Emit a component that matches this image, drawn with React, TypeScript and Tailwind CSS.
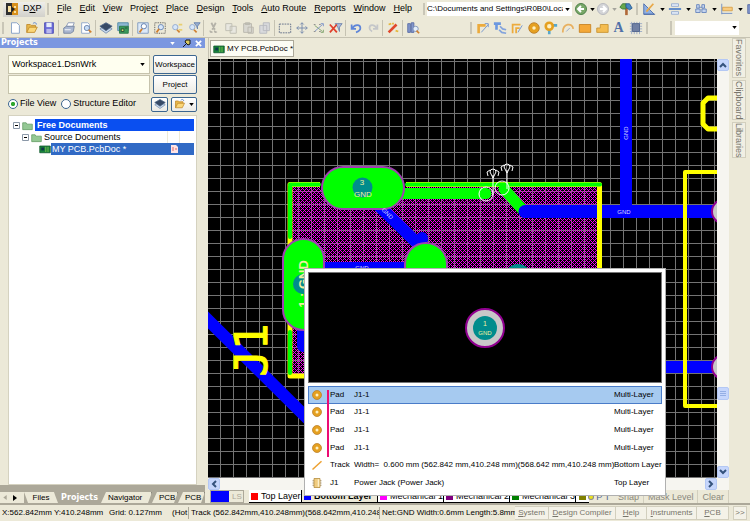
import React, { useState } from 'react';

const Accel: React.FC<{ text: string; at?: number }> = ({ text, at = 0 }) => (
  <span className="whitespace-pre">
    {text.slice(0, at)}
    <u className="underline-offset-1">{text[at]}</u>
    {text.slice(at + 1)}
  </span>
);

// 16x16 toolbar glyphs
const glyphs: Record<string, React.ReactNode> = {
  new: <path d="M4 2h6l3 3v9H4z" fill="#fff" stroke="#7f9cc4" />,
  open: (
    <>
      <path d="M2 13V4h4l1 1h5v3" fill="#e8b84a" stroke="#c08a2c" />
      <path d="M2 13l3-6h9l-3 6z" fill="#fbd778" stroke="#c08a2c" />
      <path d="M9 3c2-2 4-1 4 1" fill="none" stroke="#4b78c8" />
    </>
  ),
  save: (
    <>
      <path d="M3 2h10v12H3z" fill="#6a6ad8" stroke="#4a4ab0" />
      <path d="M5 2h6v5H5z" fill="#e6ecfa" />
      <path d="M5 9h6v5H5z" fill="#b9b9ee" />
    </>
  ),
  print: (
    <>
      <path d="M5 6l2-4h7l-2 5z" fill="#fff" stroke="#8896b4" />
      <path d="M2 8l3-2h9l-1 6-3 2H2z" fill="#a9b6d0" stroke="#74839f" />
      <path d="M3 10h7" stroke="#fff" />
    </>
  ),
  preview: (
    <>
      <path d="M3 2h7l2 2v10H3z" fill="#fff" stroke="#8ba3c8" />
      <circle cx="9" cy="8" r="3" fill="#c6dcf6" stroke="#6680ac" />
      <path d="M11 10l3 3" stroke="#d08030" strokeWidth="2" />
    </>
  ),
  layers: (
    <>
      <path d="M1 9l7-4 7 4-7 5z" fill="#c8d8ec" stroke="#7890b0" />
      <path d="M1 6l7-4 7 4-7 5z" fill="#374a66" stroke="#4f6788" />
    </>
  ),
  board: (
    <>
      <path d="M2 2h12v9H2z" fill="#8eb8d4" stroke="#4d88a4" />
      <path d="M4 6h10v8H4z" fill="#3a9a58" stroke="#287848" />
      <path d="M6 9h3v3H6zM10 8h3" fill="#d4e070" stroke="#204838" />
    </>
  ),
  zoomdoc: (
    <>
      <path d="M2 2h12v12H2z" fill="#dce9f8" stroke="#7c96bd" />
      <circle cx="9" cy="6" r="3" fill="#fff" stroke="#5374a8" />
      <path d="M7 9l-3 4" stroke="#d08030" strokeWidth="2" />
    </>
  ),
  zoomarea: (
    <>
      <path d="M2 2h12v12H2z" fill="none" stroke="#444" strokeDasharray="1 1" />
      <circle cx="9" cy="7" r="3" fill="#d6e6fa" stroke="#6684b4" />
      <path d="M7 9l-3 4" stroke="#d08030" strokeWidth="2" />
    </>
  ),
  zoomsel: (
    <>
      <circle cx="6" cy="7" r="3" fill="#d6e6fa" stroke="#8fa6cc" />
      <path d="M8 10l3 3" stroke="#d08030" strokeWidth="2" />
      <path d="M10 4h4M10 10h4" stroke="#e8d070" strokeWidth="2" />
    </>
  ),
  zoomfilter: (
    <>
      <circle cx="6" cy="7" r="3" fill="#d6e6fa" stroke="#8fa6cc" />
      <path d="M8 10l3 3" stroke="#d08030" strokeWidth="2" />
      <path d="M8 2h7l-3 4v3l-1-3z" fill="#98aed0" stroke="#6680ac" />
    </>
  ),
  cut: <path d="M5 2l4 8M10 2L6 10M4 11a1 1 0 1 0 2 1M9 11a1 1 0 1 0 2 1" fill="none" stroke="#b4b2a8" strokeWidth="2" />,
  copy: <path d="M2 3h7v8H2zM7 6h7v8H7z" fill="#e8e7e0" stroke="#bdbbb0" />,
  paste: <path d="M3 3h9v10H3zM5 2h5v2H5zM8 7h6v7H8z" fill="#d8d7d0" stroke="#b8b6ac" />,
  stamp: <path d="M2 5h8v9H2zM6 2h7v9H6z" fill="#d9dadd" stroke="#b6b8be" />,
  select: <path d="M1.500 3.500h13v10h-13z" fill="none" stroke="#5a6884" strokeDasharray="2 1" />,
  move: <path d="M8 2v12M2 8h12M6 4l2-2 2 2M6 12l2 2 2-2M4 6L2 8l2 2M12 6l2 2-2 2" fill="none" stroke="#7186aa" />,
  cross: (
    <>
      <path d="M3 5l9 7M10 13h3v-3" fill="none" stroke="#7aa06a" />
      <path d="M3 12l9-8M10 3h3v3" fill="none" stroke="#7890c8" />
      <path d="M2 4h2M2 12h2M8 4h2M8 12h2" stroke="#888" />
    </>
  ),
  clear: (
    <>
      <path d="M7 3h8l-3 4v5l-2-5z" fill="#a8bbdc" stroke="#6e84ac" />
      <path d="M1 4l8 9M9 4L1 13" stroke="#e0402c" strokeWidth="2" />
    </>
  ),
  undo: <path d="M3 4v5h5M4 8c3-5 9-4 9 0 0 3-2 4-5 5" fill="none" stroke="#5f86d8" strokeWidth="2" />,
  redo: <path d="M13 4v5H8M12 8C9 3 4 4 4 8c0 2 1 3 3 4" fill="none" stroke="#c4c6c9" strokeWidth="2" />,
  pen: (
    <>
      <path d="M3 13l9-9" stroke="#e0482c" strokeWidth="3" />
      <path d="M3 4l3-1M11 11l3 1M8 2v2" stroke="#e6b83c" strokeWidth="2" />
    </>
  ),
  find: (
    <>
      <path d="M2 3h3v10H2zM6 2h3v11H6z" fill="#8296cc" stroke="#586ca4" />
      <circle cx="11" cy="9" r="3" fill="#e4eefa" stroke="#7c90b8" />
      <path d="M12 11l3 3" stroke="#d08030" strokeWidth="2" />
    </>
  ),
  route: (
    <>
      <path d="M3 14V5h8" fill="none" stroke="#ecab3c" strokeWidth="3" />
      <path d="M6 13l8-9M10 3h4v4" fill="none" stroke="#6c90cc" />
    </>
  ),
  route2: (
    <>
      <path d="M1 3h8M4 3v7" fill="none" stroke="#6c98e0" strokeWidth="3" />
      <path d="M8 6l3 3 4 1M7 10l3 3 5 1" fill="none" stroke="#84a4dc" strokeWidth="2" />
    </>
  ),
  diff: (
    <>
      <path d="M3 14V4h9M7 14V8h4" fill="none" stroke="#ecab3c" strokeWidth="2" />
      <path d="M9 13l5-8" stroke="#6c90cc" />
    </>
  ),
  pad: (
    <>
      <circle cx="8" cy="8" r="4" fill="#fff0c0" stroke="#e5a020" strokeWidth="4" />
      <circle cx="8" cy="8" r="6" fill="none" stroke="#b87c28" />
    </>
  ),
  via: (
    <>
      <path d="M8 5h7M6 8v7" stroke="#58a8cc" strokeWidth="3" />
      <circle cx="6" cy="6" r="4" fill="#fff0c0" stroke="#e5a020" strokeWidth="3" />
    </>
  ),
  arc: (
    <>
      <path d="M2 13C2 3 13 1 14 9" fill="none" stroke="#e8b060" strokeWidth="2" />
      <path d="M6 12l4-4" stroke="#90a4c8" />
    </>
  ),
  fill: <path d="M1.500 4h13v9h-13z" fill="#f4a838" stroke="#c88424" />,
  region: <path d="M2 13V8h4V4h9v9z" fill="#f4bc50" stroke="#c89434" />,
  component: (
    <>
      <path d="M1 3h14M1 6h14M1 9h14M1 12h14M3 1v14M6 1v14M9 1v14M12 1v14" stroke="#98a8c4" />
      <path d="M4 3h8v9H4z" fill="#7080a4" stroke="#50648c" />
    </>
  ),
  home: (
    <>
      <path d="M7 5h3v10H7z" fill="#b06838" />
      <path d="M1 6l3-4h4v6H4z" fill="#68a848" stroke="#38783c" />
      <path d="M8 2h4l3 5-3 2-4-3z" fill="#4888c0" stroke="#285c94" />
    </>
  ),
  draw: (
    <>
      <path d="M2 2v12h12z" fill="#8fb0e4" stroke="#4a6ca8" />
      <path d="M5 11l8-9" stroke="#e8a848" strokeWidth="2" />
      <path d="M2 14h13" stroke="#4a6ca8" />
    </>
  ),
  align: (
    <>
      <path d="M4 2h8v3H4zM4 11h8v3H4z" fill="#e4ecf8" stroke="#94aad0" />
      <path d="M1 8h14" stroke="#5280c8" strokeWidth="2" />
    </>
  ),
  binoc: <path d="M3 3h3v4H3zM9 3h3v4H9zM2 8h5v4H2zM9 8h5v4H9zM6 6h3" fill="#c4d4ee" stroke="#6584bc" />,
  dim: (
    <>
      <path d="M3 6h11v4H3z" fill="#f8cc80" stroke="#d8a048" />
      <path d="M2 2v12M2 13h12" stroke="#6888c0" />
    </>
  ),
  folder: <path d="M1 4h5l1 2h8v8H1z" fill="#94c894" stroke="#5a945a" />,
  chip: (
    <>
      <path d="M1 4h14v9H1z" fill="#18843c" stroke="#0c5428" />
      <path d="M3 6h4v4H3z" fill="#103848" />
      <path d="M9 5v7M12 5v7" stroke="#90c850" />
    </>
  ),
  trace: <path d="M2 14L14 3" stroke="#eda030" strokeWidth="2" />,
  part: (
    <>
      <path d="M2 5h12M2 8h12M2 11h12" stroke="#8c7850" />
      <path d="M4 2h8v12H4z" fill="#f0cc80" stroke="#b08838" />
      <path d="M10 3v10" stroke="#fff0c8" strokeWidth="2" />
    </>
  ),
};

const Glyph: React.FC<{ name: string; className?: string }> = ({ name, className = 'size-3' }) => (
  <svg viewBox="0 0 16 16" className={`shrink-0 ${className}`} aria-hidden="true">{glyphs[name]}</svg>
);

const Grip = () => <i className="mx-[2px] h-3 w-[2px] shrink-0 bg-[#c9c6b7]" />;

const Caret: React.FC<{ className?: string }> = ({ className = 'text-black' }) => (
  <svg viewBox="0 0 6 4" className={`h-[3px] w-[5px] shrink-0 ${className}`} aria-hidden="true">
    <path d="M0 0h6L3 4z" fill="currentColor" />
  </svg>
);

const Tool: React.FC<{ name: string }> = ({ name }) => (
  <button aria-label={name} className="flex h-4 w-[17px] shrink-0 items-center justify-center">
    <Glyph name={name} className="size-[14px]" />
  </button>
);

const menus: [string, number][] = [
  ['File', 0], ['Edit', 0], ['View', 0], ['Project', 5], ['Place', 0], ['Design', 0],
  ['Tools', 0], ['Auto Route', 0], ['Reports', 0], ['Window', 0], ['Help', 0],
];

const toolGroups = [
  ['new', 'open', 'save'],
  ['print', 'preview'],
  ['layers', 'board'],
  ['zoomdoc', 'zoomarea', 'zoomsel', 'zoomfilter'],
  ['cut', 'copy', 'paste', 'stamp'],
  ['select', 'move', 'cross', 'clear'],
  ['undo', 'redo'],
  ['pen'],
  ['find'],
];

const MenuBar = () => (
  <header className="flex h-[18px] items-center overflow-hidden pl-[3px] text-[9px]">
    <button className="flex h-[15px] w-[42px] shrink-0 items-center gap-[5px] bg-gradient-to-b from-[#efeeea] to-[#d2d1cb] pl-[3px]">
      <svg viewBox="0 0 12 12" className="size-3 shrink-0">
        <path d="M0 0h6v12H0z" fill="#303030" />
        <path d="M6 0h6v12H6z" fill="#d8901c" />
        <path d="M2 3h3v6H2zM8 3h2v2H8zM8 8h2v2H8z" fill="#f8e0a0" />
        <path d="M6 4l3 2-3 3z" fill="#202020" />
      </svg>
      <Accel text="DXP" at={1} />
    </button>
    <Grip />
    <nav className="flex w-[370px] shrink-0 justify-between pr-[9px] pl-[6px]">
      {menus.map(([text, at]) => (
        <button key={text}><Accel text={text} at={at} /></button>
      ))}
    </nav>
    <Grip />
    <label className="relative flex h-[14px] w-[145px] shrink-0 items-center bg-white text-[8px]">
      <select aria-label="Document path" className="w-full appearance-none outline-none">
        <option>C:\Documents and Settings\R0B0\Loca</option>
      </select>
      <span className="pointer-events-none absolute right-0 flex h-3 w-[9px] items-center justify-center bg-white"><Caret /></span>
    </label>
    <button aria-label="Back" className="flex w-[22px] shrink-0 items-center justify-center gap-[3px] pl-[3px]">
      <svg viewBox="0 0 12 12" className="size-3 shrink-0">
        <circle cx="6" cy="6" r="5.500" fill="#78a868" stroke="#50804c" />
        <path d="M9 6H3M6 3L3 6l3 3" fill="none" stroke="#fff" strokeWidth="2" />
      </svg>
      <Caret />
    </button>
    <button aria-label="Forward" className="flex w-[23px] shrink-0 items-center justify-center gap-[3px] pl-[3px]">
      <svg viewBox="0 0 12 12" className="size-3 shrink-0">
        <circle cx="6" cy="6" r="5.500" fill="#d4d5d8" stroke="#b8b9be" />
        <path d="M3 6h6M6 3l3 3-3 3" fill="none" stroke="#fff" strokeWidth="2" />
      </svg>
      <Caret className="text-[#a5a49c]" />
    </button>
    <Tool name="home" />
    <Grip />
    {['draw', 'align', 'binoc', 'dim', 'find'].map((name) => (
      <button key={name} aria-label={name} className="flex w-[26px] shrink-0 items-center gap-[4px] pl-[2px]">
        <Glyph name={name} className="size-[14px]" />
        <Caret />
      </button>
    ))}
  </header>
);

const ToolBar = () => (
  <div className="flex h-5 items-center overflow-hidden border-b border-[#c5c2b2]">
    <div className="flex w-[468px] shrink-0 items-center">
      <Grip />
      {toolGroups.map((group, i) => (
        <React.Fragment key={group[0]}>
          {i > 0 && <i className="mx-px h-4 w-px shrink-0 bg-[#c5c2b2]" />}
          {group.map((name) => <Tool key={name} name={name} />)}
        </React.Fragment>
      ))}
    </div>
    <Grip />
    {['route', 'route2', 'diff', 'pad', 'via', 'arc', 'fill', 'region'].map((name) => <Tool key={name} name={name} />)}
    <button className="w-[17px] shrink-0 font-['Liberation_Serif',serif] text-[14px] leading-4 font-bold text-[#5070a8]">A</button>
    <Tool name="component" />
    <Grip />
    <label className="relative ml-5 flex h-[14px] shrink-0 items-center border-l-2 border-[#c9c6b7] pl-[3px]">
      <select aria-label="Filter" className="h-[14px] w-[64px] appearance-none bg-white outline-none" />
      <span className="pointer-events-none absolute right-0 flex h-3 w-[9px] items-center justify-center"><Caret /></span>
    </label>
  </div>
);

const TreeToggle = () => (
  <svg viewBox="0 0 7 7" className="size-[7px] shrink-0"><path d="M.5.500h6v6h-6z" fill="#fff" stroke="#8b98a8" /><path d="M2 3.500h3" stroke="#000" /></svg>
);

const panelButton = 'flex items-center justify-center rounded-[2px] border border-[#3c6690] bg-gradient-to-b from-white to-[#ecebe5]';

const ProjectsPanel = () => {
  const [view, setView] = useState('File View');

  return (
    <aside className="flex w-[205px] shrink-0 flex-col text-[9px]">
      <div className="flex h-[10px] items-center bg-[#7b97e0] pr-[3px] pl-px leading-[10px] font-bold text-white">
        <h2 className="flex-1 font-['DejaVu_Sans',sans-serif] text-[8px]">Projects</h2>
        <button aria-label="Panel menu"><Caret className="mr-2 text-white" /></button>
        <button aria-label="Pin"><svg viewBox="0 0 8 8" className="mr-1 size-2"><path d="M3 1h4v4L5 6 2 3zM3 5L0 8" fill="#d8c860" stroke="#181818" /></svg></button>
        <button aria-label="Close"><svg viewBox="0 0 8 8" className="size-[7px]"><path d="M1 1l6 6M7 1L1 7" stroke="#fff" strokeWidth="2" /></svg></button>
      </div>
      <div className="flex flex-1 flex-col px-2 pt-[7px]">
        <div className="grid grid-cols-[142px_1fr] gap-x-[3px] gap-y-px">
          <label className="relative flex h-[19px] items-center border border-[#c6c3ac] bg-[#fffff0]">
            <select aria-label="Workspace" className="w-full appearance-none pl-[3px] outline-none">
              <option>Workspace1.DsnWrk</option>
            </select>
            <span className="pointer-events-none absolute right-1"><Caret /></span>
          </label>
          <button className={`${panelButton} text-[8px]`}>Workspace</button>
          <input aria-label="Project" className="h-[19px] min-w-0 border border-[#c6c3ac] bg-[#fffff0] px-1 outline-none" />
          <button className={`${panelButton} text-[8px]`}>Project</button>
        </div>
        <div className="mt-[2px] flex h-[16px] items-center">
          {['File View', 'Structure Editor'].map((text) => (
            <label key={text} className="mr-[5px] flex items-center gap-[2px] whitespace-nowrap">
              <input
                type="radio"
                name="view"
                checked={view === text}
                onChange={() => setView(text)}
                className="size-[10px] appearance-none rounded-full border border-[#3c6690] bg-white checked:bg-[radial-gradient(#30a830_35%,white_40%)]"
              />
              {text}
            </label>
          ))}
          <button aria-label="Layers" className={`${panelButton} ml-auto h-[15px] w-[17px]`}><Glyph name="layers" /></button>
          <button aria-label="Open" className={`${panelButton} ml-[3px] h-[15px] w-[26px] gap-[3px]`}><Glyph name="open" /><Caret /></button>
        </div>
        <ul className="mt-[3px] flex-1 border border-[#d5d2c0] bg-white px-[2px] pt-[3px] leading-[12px]">
          <li className="flex h-3 items-center gap-[2px] pl-[2px]">
            <TreeToggle />
            <Glyph name="folder" className="size-[11px]" />
            <b className="flex-1 bg-[#0a4ff0] pl-[2px] text-white">Free Documents</b>
          </li>
          <li className="flex h-3 items-center gap-[2px] pl-[11px]">
            <TreeToggle />
            <Glyph name="folder" className="size-[11px]" />
            <span className="flex-1">Source Documents</span>
            <i className="h-3 w-[13px] border-x border-[#ece9d8]" />
            <i className="w-3" />
          </li>
          <li className="flex h-3 items-center pl-[28px]">
            <Glyph name="chip" />
            <span className="flex flex-1 items-center justify-between bg-[#316ac5] pr-4 pl-px text-white">
              MY PCB.PcbDoc *
              <svg viewBox="0 0 7 8" className="h-2 w-[7px]"><path d="M0 0h5l2 2v6H0z" fill="#ffe4e4" /><path d="M2 2v4M4 4h2" stroke="#e06868" /></svg>
            </span>
          </li>
        </ul>
      </div>
      <div className="flex h-[18px] items-end overflow-hidden bg-[#aca899] pt-[6px] text-[8px] leading-[11px]">
        <div className="flex h-[11px] w-6 shrink-0 items-center justify-around bg-[#ece9d8] pr-1">
          <svg viewBox="0 0 4 6" className="h-[5px] w-1"><path d="M4 0v6L0 3z" fill="#aca899" /></svg>
          <svg viewBox="0 0 4 6" className="h-[6px] w-1"><path d="M0 0v6l4-3z" fill="#000" /></svg>
        </div>
        <button className="h-[11px] w-[34px] shrink-0 bg-[#ece9d8] [clip-path:polygon(0_0,88%_0,100%_100%,12%_100%)]">Files</button>
        <button className="h-[11px] w-[43px] shrink-0 font-['DejaVu_Sans',sans-serif] font-bold text-white">Projects</button>
        {[['Navigator', 'w-[51px]'], ['PCB', 'w-[26px]'], ['PCB I', 'w-[27px]']].map(([text, width]) => (
          <button key={text} className={`${width} h-[11px] shrink-0 border-r border-[#77756a] bg-[#ece9d8] pl-[7px] text-left whitespace-nowrap [clip-path:polygon(5px_0,100%_0,calc(100%-4px)_100%,0_100%)]`}>{text}</button>
        ))}
      </div>
    </aside>
  );
};

// Board artwork, drawn in window coordinates and shifted to the canvas origin
const Board = () => (
  <svg className="absolute inset-0 size-full" aria-label="PCB board">
    <defs>
      <pattern id="grid" width="13" height="13" patternUnits="userSpaceOnUse" x="207" y="61">
        <path d="M.5 0v13M0 .500h13" stroke="#747474" />
      </pattern>
      <pattern id="hatch" width="4" height="4" patternUnits="userSpaceOnUse">
        <path d="M0 2h1v1H0zM1 1h1v1H1zM2 0h1v1H2zM3 1h1v1H3zM1 3h1v1H1zM3 3h1v1H3z" fill="#f000f0" shapeRendering="crispEdges" />
      </pattern>
    </defs>
    <g transform="translate(-208 -59)" fontFamily="'Liberation Sans', sans-serif" textAnchor="middle">
      <rect x="208" y="59" width="100%" height="100%" fill="url(#grid)" />
      <rect x="290" y="185" width="310" height="191" fill="url(#hatch)" />
      <g fill="none" stroke="#00f" strokeWidth="12" strokeLinecap="round">
        <path d="M200 312L312 423" />
        <path d="M626 50V211" />
        <path d="M525 211.500H740" strokeWidth="13" />
        <path d="M640 367H740" />
        <path d="M375 202L415 241M422 238v2M325 268H410M303 325V346" />
      </g>
      <g fill="none" stroke="#ff0" strokeWidth="4" strokeLinecap="round" strokeLinejoin="round">
        <path d="M290 184.500H599.500V376H290z" strokeWidth="5" />
        <path d="M740 172H685V406H740" />
        <path d="M740 98H708L703 103V124L708 129H740" strokeWidth="5" />
      </g>
      {/* gap in the outline around the top pad */}
      <path d="M320 181H406V189H320z" fill="#000" />
      <g fill="none" stroke="#0f0" strokeLinecap="round">
        <path d="M290 184.500H319M407 184.500H600M290 186V237M290 332V373" strokeWidth="4" />
        <path d="M400 193.500H486M504 189L522 209" strokeWidth="11" />
      </g>
      <path d="M525 211.500H560" stroke="#00f" strokeWidth="13" strokeLinecap="round" />
      <g fill="#0f0" stroke="#a040b0" strokeWidth="2">
        <rect x="322" y="167" width="82" height="42" rx="21" />
        <rect x="283" y="239" width="41" height="91" rx="20.500" />
        <rect x="405" y="243" width="42" height="50" rx="21" />
      </g>
      <g fill="#008c8c">
        <circle cx="362.500" cy="187.500" r="10" />
        <circle cx="303" cy="284" r="10" />
        <circle cx="518" cy="277" r="13" />
      </g>
      <g fill="none" stroke="#fff">
        <circle cx="486" cy="194" r="7" />
        <circle cx="502" cy="188" r="7" />
        <path d="M493 195V175M490 172l3 6 3-6a3 3 0 0 0-6 0M488 176l-1-4 3-2M498 176l1-4-3-2" />
        <path d="M507 189V170M504 167l3 6 3-6a3 3 0 0 0-6 0M502 171l-1-4 3-2M512 171l1-4-3-2" />
      </g>
      <g fill="#c8c8c8" stroke="#900090" strokeWidth="2">
        <circle cx="724" cy="211.500" r="12" />
        <circle cx="724" cy="367" r="12" />
      </g>
      <g fill="#f0f0a0" fontSize="8">
        <text x="362" y="185">3</text>
        <text x="363" y="197">GND</text>
        <text transform="translate(308 284) rotate(-90)" fontSize="13" fontWeight="bold">1 : GND</text>
      </g>
      <g fill="#d8d8ff" fontSize="6">
        <text x="624" y="214">GND</text>
        <text x="362" y="270">GND</text>
        <text transform="translate(628 133) rotate(-90)">GND</text>
        <text transform="translate(386 215) rotate(45)">GND</text>
      </g>
      <text
        transform="translate(267 350) rotate(-90)"
        fill="#ff0"
        stroke="#ff0"
        strokeLinejoin="round"
        fontFamily="'DejaVu Sans Mono', monospace"
        fontSize="44"
      >
        J1
      </text>
    </g>
  </svg>
);

const hits = [
  ['pad', 'Pad', 'J1-1', 'Multi-Layer'],
  ['pad', 'Pad', 'J1-1', 'Multi-Layer'],
  ['pad', 'Pad', 'J1-1', 'Multi-Layer'],
  ['pad', 'Pad', 'J1-1', 'Multi-Layer'],
  ['trace', 'Track', 'Width=  0.600 mm (562.842 mm,410.248 mm)(568.642 mm,410.248 mm)', 'Bottom Layer'],
  ['part', 'J1', 'Power Jack (Power Jack)', 'Top Layer'],
];

const PickPopup = () => (
  <div className="absolute top-[209px] left-[96px] z-10 w-[362px] border border-[#b0b0b0] bg-white p-[3px]">
    <div className="flex h-[111px] items-center justify-center border border-[#777] bg-black">
      <svg viewBox="0 0 42 42" className="size-[42px]" fontFamily="'Liberation Sans', sans-serif" fontSize="7" textAnchor="middle">
        <circle cx="21" cy="21" r="19" fill="#c8c8c8" stroke="#900090" strokeWidth="2" />
        <circle cx="21" cy="21" r="12" fill="#008c8c" />
        <text x="21" y="19" fill="#f0f0a0">1</text>
        <text x="21" y="28" fontSize="6" fill="#f0f0a0">GND</text>
      </svg>
    </div>
    <div className="relative pt-[3px]">
      <table className="h-[106px] w-full table-fixed border-collapse text-[8px] leading-3">
        <tbody>
          {hits.map(([icon, kind, detail, layer], i) => (
            <tr key={i} className={i === 0 ? 'bg-[#a6caf0] outline outline-[#4a7cc8] -outline-offset-1' : ''}>
              <td className="w-[22px] pl-[3px]"><Glyph name={icon} /></td>
              <td className="w-6">{kind}</td>
              <td className="whitespace-pre">{detail}</td>
              <td className="w-[48px] whitespace-nowrap">{layer}</td>
            </tr>
          ))}
        </tbody>
      </table>
      <i className="absolute top-[7px] left-[19px] h-[67px] w-[2px] bg-[#ec0c74]" />
    </div>
  </div>
);

const ScrollButton: React.FC<{ label: string; d: string }> = ({ label, d }) => (
  <button aria-label={label} className="flex size-3 shrink-0 items-center justify-center rounded-[2px] border border-[#b4c8f4] bg-[#c6d6fc]">
    <svg viewBox="0 0 8 8" className="size-2"><path d={d} fill="none" stroke="#34527c" strokeWidth="2" /></svg>
  </button>
);

const layers = [
  ['Top Layer', 'bg-[#f00]', 'w-[53px] bg-white'],
  ['Bottom Layer', 'bg-[#00f]', 'w-[76px] bg-[#ece9d8] font-bold'],
  ['Mechanical 1', 'bg-[#f0f]', 'w-[66px] bg-white'],
  ['Mechanical 2', 'bg-[#800080]', 'w-[66px] bg-white'],
  ['Mechanical 3', 'bg-[#008000]', 'w-[66px] bg-white'],
];

const LayerBar = () => (
  <div className="flex h-[13px] text-[9px] leading-[12px]">
    <div className="flex min-w-0 flex-1 overflow-hidden">
      <div className="mr-[5px] ml-[2px] flex w-[34px] shrink-0 border border-[#aca899] text-[8px] text-[#aca899]">
        <i className="mr-[3px] w-[18px] bg-[#00f]" />LS
      </div>
      {layers.map(([text, swatch, tab]) => (
        <button key={text} className={`${tab} flex shrink-0 items-center gap-[3px] border-r border-b border-black pl-[2px] whitespace-nowrap`}>
          <i className={`size-[7px] shrink-0 ${swatch}`} />{text}
        </button>
      ))}
      <button aria-label="Mechanical 4" className="flex w-[29px] shrink-0 items-center border-b border-black bg-white pl-[3px]">
        <i className="size-[7px] bg-[#808000]" />
      </button>
    </div>
    <div className="flex shrink-0 text-[#8a887c]">
      <button className="mr-1 flex items-center gap-[3px] whitespace-nowrap text-[#4a6090]">
        <i className="size-1 rounded-full bg-[#e8e020] ring-1 ring-[#888]" />P T
      </button>
      {['Snap', 'Mask Level', 'Clear'].map((text) => (
        <button key={text} className="border-r border-[#d2cfbe] px-1">{text}</button>
      ))}
    </div>
  </div>
);

const Workspace = () => (
  <main className="ml-[3px] flex min-w-0 flex-1 flex-col">
    <div className="flex h-[21px] items-center border-l border-[#c5c2b2] pl-px">
      <button className="flex h-[17px] w-[84px] items-center gap-[2px] border border-[#aca899] bg-[#fcfcf4] pl-[2px] text-[8px] whitespace-nowrap">
        <Glyph name="chip" />MY PCB.PcbDoc *
      </button>
    </div>
    <div className="relative flex flex-1 flex-col">
      <div className="flex flex-1">
        <div className="relative min-w-0 flex-1 overflow-hidden bg-black"><Board /></div>
        <div className="flex w-3 shrink-0 flex-col bg-[#f6f5f0]">
          <ScrollButton label="Scroll up" d="M1 6l3-3 3 3" />
          <div className="flex-1" />
          <i className="mb-[66px] flex h-[13px] items-center justify-center rounded-[2px] border border-[#b4c8f4] bg-[#c6d6fc]">
            <svg viewBox="0 0 6 6" className="size-[6px]"><path d="M0 .500h6M0 2.500h6M0 4.500h6" stroke="#94aee4" /></svg>
          </i>
          <ScrollButton label="Scroll down" d="M1 2l3 3 3-3" />
        </div>
      </div>
      <div className="flex h-3 justify-between bg-[#f6f5f0] pr-3">
        <ScrollButton label="Scroll left" d="M6 1L3 4l3 3" />
        <ScrollButton label="Scroll right" d="M2 1l3 3-3 3" />
      </div>
      <PickPopup />
    </div>
    <LayerBar />
  </main>
);

const StatusBar = () => (
  <footer className="flex h-[18px] items-center overflow-hidden border-t-2 border-[#aca899] text-[8px] whitespace-nowrap">
    <span className="w-[106px] shrink-0 pl-[2px]">X:562.842mm Y:410.248mm</span>
    <span className="w-[64px] shrink-0 pl-[3px]">Grid: 0.127mm</span>
    <span className="w-[19px] shrink-0 border-r border-[#aca899] pl-[2px]">(Hot</span>
    <span className="min-w-0 flex-1 overflow-hidden border-r border-[#aca899] pl-[2px]">Track (562.842mm,410.248mm)(568.642mm,410.248n</span>
    <span className="w-[135px] shrink-0 pl-[2px]">Net:GND Width:0.6mm Length:5.8mm</span>
    <div className="mr-[3px] flex h-[14px] shrink-0 text-[#77756a]">
      {[['System', 'w-[34px]'], ['Design Compiler', 'w-[67px]'], ['Help', 'w-[31px]'], ['Instruments', 'w-[50px]'], ['PCB', 'w-[32px]']].map(([text, width]) => (
        <button key={text} className={`${width} border border-l-0 border-[#d2cfbe] bg-[#f4f2e8] leading-3`}><Accel text={text} /></button>
      ))}
      <button className="ml-1 w-[14px] border border-[#d2cfbe] bg-[#f4f2e8] leading-3">&gt;&gt;</button>
    </div>
  </footer>
);

const App: React.FC = () => (
  <div className="flex min-h-screen flex-col bg-[#ece9d8] font-['Liberation_Sans',sans-serif] text-black">
    <MenuBar />
    <ToolBar />
    <div className="flex flex-1">
      <ProjectsPanel />
      <Workspace />
      <nav className="flex w-[21px] shrink-0 flex-col items-start gap-[2px] pl-[3px] text-[9px] text-[#77756a]">
        {[['Favorites', 'h-10'], ['Clipboard', 'h-10'], ['Libraries', 'h-9']].map(([text, height]) => (
          <button key={text} className={`${height} w-[14px] border border-[#d2cfbe] bg-[#f1efe4] leading-[12px] [writing-mode:vertical-rl]`}>{text}</button>
        ))}
      </nav>
    </div>
    <StatusBar />
  </div>
);

export default App;
